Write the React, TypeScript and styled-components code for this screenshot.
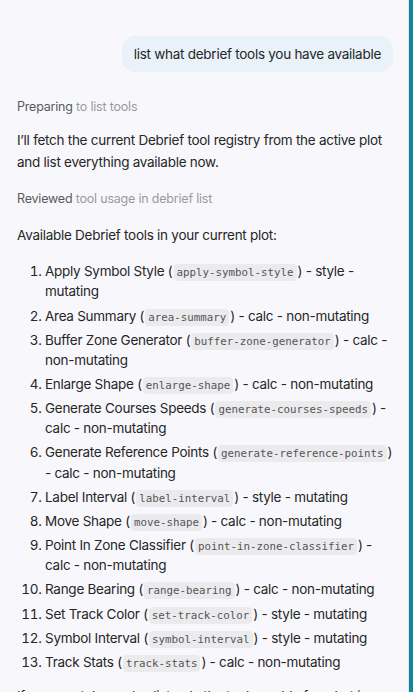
import React from "react";
import styled, { createGlobalStyle } from "styled-components";

const Global = createGlobalStyle`
  html, body { margin: 0; padding: 0; height: 100%; overflow: hidden; }
  body { background: #f8f8fc; font-family: Inter, "Noto Sans", sans-serif; }
`;

const Shell = styled.div`
  display: flex;
  width: 413px;
  height: 692px;
  overflow: hidden;
`;

const Chat = styled.main`
  flex: 1;
  min-width: 0;
  background: #f8f8fc;
  border-right: 1px solid #e4e4ea;
  padding: 36px 15px 0 17px;
  box-sizing: border-box;
  color: #262626;
  font-size: 13.5px;
  letter-spacing: -0.27px;
`;

const Accent = styled.div`
  width: 4px;
  background: #0f869c;
`;

const UserRow = styled.div`
  display: flex;
  justify-content: flex-end;
`;

const Bubble = styled.div`
  background: #e9f1f9;
  border-radius: 13px;
  padding: 8px 12px;
  line-height: 20px;
  color: #262626;
`;

const Status = styled.div<{ $top: number }>`
  margin-top: ${(p) => p.$top}px;
  font-size: 12.5px;
  letter-spacing: -0.2px;
  line-height: 18px;
  color: #5a5a5a;
  span { color: #9a9a9e; }
`;

const Para = styled.p<{ $top: number }>`
  margin: ${(p) => p.$top}px 0 0;
  line-height: 21.7px;
`;

const List = styled.ol`
  margin: 14px 0 0;
  padding-left: 28px;
  line-height: 20.3px;
`;

const Item = styled.li`
  margin-bottom: 3.8px;
  &::marker { color: #262626; }
`;

const Code = styled.code`
  font-family: "DejaVu Sans Mono", "Liberation Mono", monospace;
  font-size: 10.8px;
  line-height: 1;
  letter-spacing: 0;
  color: #555;
  background: #ebebee;
  border-radius: 4px;
  padding: 2px 3px;
  margin: 0 1px;
`;

const tools: [string, string, string][] = [
  ["Apply Symbol Style", "apply-symbol-style", "style - mutating"],
  ["Area Summary", "area-summary", "calc - non-mutating"],
  ["Buffer Zone Generator", "buffer-zone-generator", "calc - non-mutating"],
  ["Enlarge Shape", "enlarge-shape", "calc - non-mutating"],
  ["Generate Courses Speeds", "generate-courses-speeds", "calc - non-mutating"],
  ["Generate Reference Points", "generate-reference-points", "calc - non-mutating"],
  ["Label Interval", "label-interval", "style - mutating"],
  ["Move Shape", "move-shape", "calc - non-mutating"],
  ["Point In Zone Classifier", "point-in-zone-classifier", "calc - non-mutating"],
  ["Range Bearing", "range-bearing", "calc - non-mutating"],
  ["Set Track Color", "set-track-color", "style - mutating"],
  ["Symbol Interval", "symbol-interval", "style - mutating"],
  ["Track Stats", "track-stats", "calc - non-mutating"],
];

export default function App() {
  return (
    <>
      <Global />
      <Shell>
        <Chat>
          <UserRow>
            <Bubble>list what debrief tools you have available</Bubble>
          </UserRow>
          <Status $top={26}>
            Preparing <span>to list tools</span>
          </Status>
          <Para $top={14}>
            I’ll fetch the current Debrief tool registry from the active plot and list everything available now.
          </Para>
          <Status $top={17}>
            Reviewed <span>tool usage in debrief list</span>
          </Status>
          <Para $top={17}>Available Debrief tools in your current plot:</Para>
          <List>
            {tools.map(([name, id, kind]) => (
              <Item key={id}>
                {name} (<Code>{id}</Code>) - {kind}
              </Item>
            ))}
          </List>
          <Para $top={14}>
            If you want, I can also list only the tools usable for what is selected in the plot.
          </Para>
        </Chat>
        <Accent />
      </Shell>
    </>
  );
}
